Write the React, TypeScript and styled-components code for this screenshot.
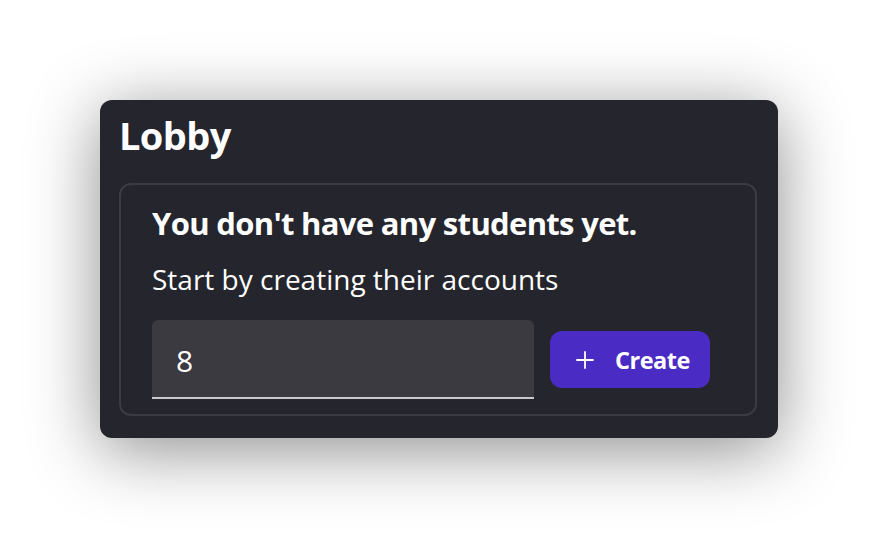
import React from "react";
import styled, { createGlobalStyle } from "styled-components";

const Global = createGlobalStyle`
  html, body { margin: 0; padding: 0; background: #ffffff; }
  body { font-family: "Open Sans", "Noto Sans", sans-serif; }
  * { box-sizing: border-box; }
`;

const Page = styled.div`
  width: 878px;
  height: 538px;
  display: flex;
  align-items: flex-start;
  justify-content: flex-start;
  padding: 100px 0 0 100px;
`;

const Card = styled.section`
  width: 678px;
  height: 338px;
  background: #25252d;
  border-radius: 12px;
  box-shadow: 0 12px 70px rgba(0, 0, 0, 0.45);
  padding: 9px 21px 22px 19px;
  display: flex;
  flex-direction: column;
  gap: 22px;
`;

const Title = styled.h1`
  margin: 0;
  color: #ffffff;
  font-family: "Open Sans", sans-serif;
  font-weight: 700;
  font-size: 38px;
  line-height: 52px;
  letter-spacing: -0.6px;
`;

const Panel = styled.div`
  flex: 1;
  border: 2px solid #3b3b42;
  border-radius: 12px;
  padding: 18px 32px 15px 31px;
  display: flex;
  flex-direction: column;
`;

const Heading = styled.h2`
  margin: 0;
  color: #ffffff;
  font-family: "Open Sans", sans-serif;
  font-weight: 700;
  font-size: 31px;
  line-height: 40px;
  letter-spacing: -0.68px;
`;

const Sub = styled.p`
  margin: 19px 0 0 0;
  color: #ffffff;
  font-family: "Open Sans", sans-serif;
  font-weight: 400;
  font-size: 28px;
  line-height: 34px;
  letter-spacing: 0;
`;

const Row = styled.div`
  margin-top: 24px;
  display: flex;
  align-items: center;
  gap: 16px;
`;

const Field = styled.input`
  width: 382px;
  height: 79px;
  background: #3a3a40;
  border: none;
  border-bottom: 2px solid #c9c9cc;
  border-radius: 6px 6px 0 0;
  color: #ffffff;
  font-family: "Open Sans", sans-serif;
  font-size: 30px;
  padding: 4px 24px 0 24px;
  outline: none;
`;

const Button = styled.button`
  height: 57px;
  width: 160px;
  background: #4a2bc4;
  border: none;
  border-radius: 12px;
  color: #ffffff;
  display: flex;
  align-items: center;
  padding: 0 0 0 26px;
  gap: 21px;
  font-family: "Open Sans", sans-serif;
  font-weight: 700;
  font-size: 23.5px;
  letter-spacing: -0.5px;
  cursor: pointer;
`;

const PlusIcon = () => (
  <svg width="18" height="18" viewBox="0 0 18 18" fill="none">
    <path d="M9 1v16M1 9h16" stroke="#ffffff" strokeWidth="1.8" strokeLinecap="round" />
  </svg>
);

export default function App() {
  return (
    <>
      <Global />
      <Page>
        <Card>
          <Title>Lobby</Title>
          <Panel>
            <Heading>You don't have any students yet.</Heading>
            <Sub>Start by creating their accounts</Sub>
            <Row>
              <Field defaultValue="8" />
              <Button>
                <PlusIcon />
                Create
              </Button>
            </Row>
          </Panel>
        </Card>
      </Page>
    </>
  );
}
